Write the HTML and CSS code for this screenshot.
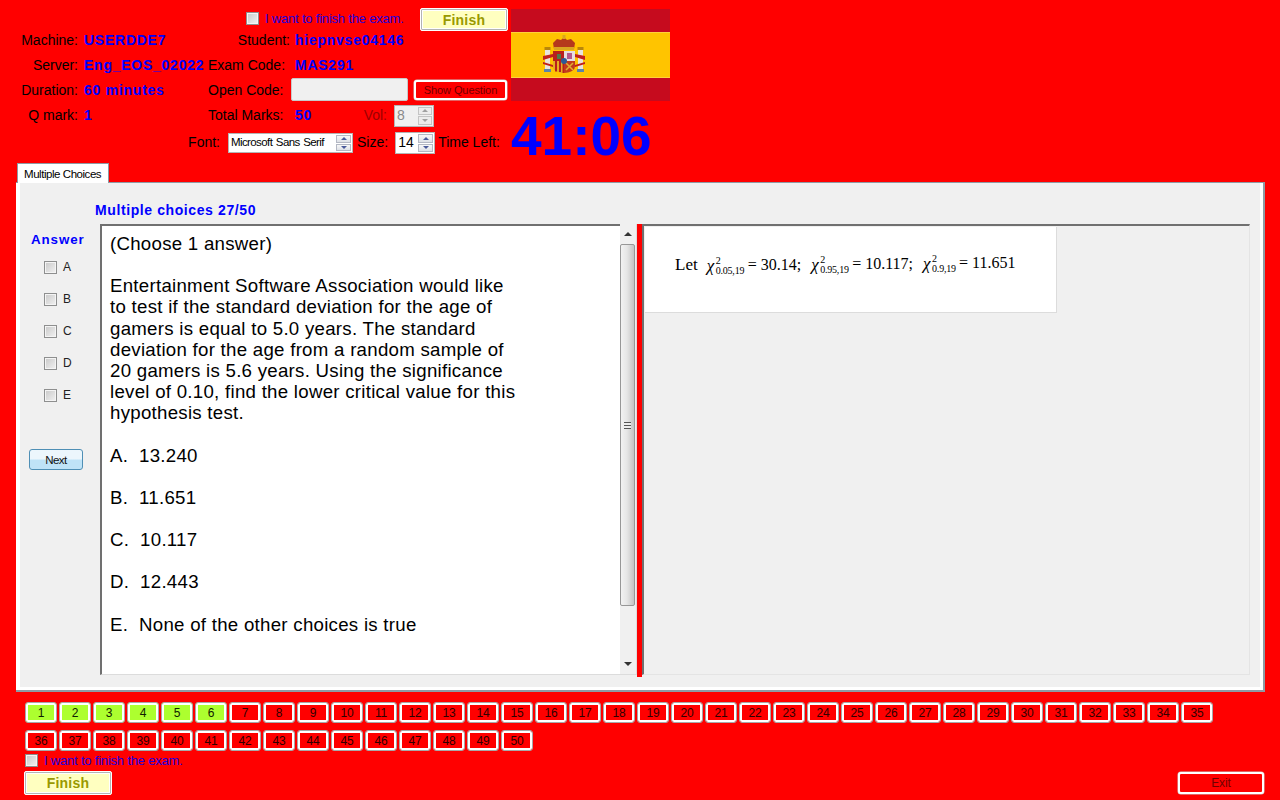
FILE: index.html
```html
<!DOCTYPE html>
<html lang="en">
<head>
<meta charset="utf-8">
<title>Exam</title>
<link rel="stylesheet" href="styles.css">
</head>
<body>
<header class="header">
  <div class="info">
    <div class="row row-top">
      <input type="checkbox" class="check check-top">
      <span class="finish-label label-top">I want to finish the exam.</span>
      <button class="finish finish-top">Finish</button>
    </div>
    <div class="row">
      <span class="lab lab-a">Machine:</span><span class="val val-a">USERDDE7</span>
      <span class="lab lab-student">Student:</span><span class="val val-student">hiepnvse04146</span>
    </div>
    <div class="row">
      <span class="lab lab-a">Server:</span><span class="val val-a">Eng_EOS_02022</span>
      <span class="lab lab-b">Exam Code:</span><span class="val val-b">MAS291</span>
    </div>
    <div class="row">
      <span class="lab lab-a">Duration:</span><span class="val val-a">60 minutes</span>
      <span class="lab lab-b">Open Code:</span><span class="open-code"></span>
      <button class="outline show-question">Show Question</button>
    </div>
    <div class="row">
      <span class="lab lab-a">Q mark:</span><span class="val val-a">1</span>
      <span class="lab lab-b">Total Marks:</span><span class="val val-b val-marks">50</span>
      <span class="lab lab-vol">Vol:</span>
      <span class="spin spin-vol"><span class="spin-text">8</span><span class="spin-btns"><i class="up"></i><i class="down"></i></span></span>
    </div>
    <div class="row row-font">
      <span class="lab lab-font">Font:</span>
      <span class="spin spin-font"><span class="spin-text">Microsoft Sans Serif</span><span class="spin-btns"><i class="up"></i><i class="down"></i></span></span>
      <span class="lab lab-size">Size:</span>
      <span class="spin spin-size"><span class="spin-text">14</span><span class="spin-btns"><i class="up"></i><i class="down"></i></span></span>
      <span class="lab lab-time">Time Left:</span>
    </div>
  </div>
  <div class="side">
    <svg class="flag" viewBox="0 0 159 92" width="159" height="92" aria-label="Flag of Spain">
      <rect width="159" height="92" fill="#c60b1e"/>
      <rect y="23" width="159" height="46" fill="#ffd23c"/>
      <rect y="24" width="159" height="44" fill="#ffc400"/>
      <rect x="33.500" y="38" width="6" height="3" fill="#b8860b"/>
      <rect x="66.500" y="38" width="6" height="3" fill="#b8860b"/>
      <rect x="34" y="41" width="5" height="19" fill="#e8e4dc"/>
      <rect x="67" y="41" width="5" height="19" fill="#e8e4dc"/>
      <rect x="33" y="60" width="7" height="3" fill="#5b84a8"/>
      <rect x="66" y="60" width="7" height="3" fill="#5b84a8"/>
      <path d="M32 47l10-2v3l-10 3zM32 53l10 3v2l-10-3zM74 47l-10-2v3l10 3zM74 53l-10 3v2l10-3z" fill="#c0201c"/>
      <path d="M43 40l-1-6 4-4 4 1 3-3 3 3 4-1 4 4-1 6z" fill="#b5381c"/>
      <path d="M43 38h20v3H43zM51.500 26h3v4h-3z" fill="#d9a520"/>
      <path d="M42 42h22v15q0 6-11 7-11-1-11-7z" fill="#c9a227"/>
      <rect x="42" y="42" width="11" height="10" fill="#b8201c"/>
      <rect x="53" y="42" width="11" height="10" fill="#e6dfe2"/>
      <path d="M56 44h5v6h-5z" fill="#b45a8c"/>
      <path d="M46 45h4v5h-4z" fill="#4f7a4a"/>
      <path d="M42 52h11v12q-10-1-11-7z" fill="#e6ae22"/>
      <path d="M44 52h2v10.500h-2zM48 52h2v11h-2zM51.500 52h1.500v12h-1.500z" fill="#b8201c"/>
      <path d="M53 52h11v5q0 6-11 7z" fill="#c23a1c"/>
      <path d="M55 54l7 7M62 54l-7 7" stroke="#e0b030" stroke-width="1.500"/>
      <circle cx="53" cy="52" r="3" fill="#2c5a96"/>
    </svg>
    <div class="clock">41:06</div>
  </div>
</header>

<div class="tabs"><div class="tab">Multiple Choices</div></div>
<main class="panel">
  <h2 class="counter">Multiple choices 27/50</h2>
  <div class="work">
    <aside class="answers">
      <h3 class="answer-title">Answer</h3>
      <label class="option"><input type="checkbox" class="check"><span>A</span></label>
      <label class="option"><input type="checkbox" class="check"><span>B</span></label>
      <label class="option"><input type="checkbox" class="check"><span>C</span></label>
      <label class="option"><input type="checkbox" class="check"><span>D</span></label>
      <label class="option"><input type="checkbox" class="check"><span>E</span></label>
      <button class="next">Next</button>
    </aside>
    <section class="question">
      <div class="question-text">
        <p>(Choose 1 answer)</p>
        <p>Entertainment Software Association would like to test if the standard deviation for the age of gamers is equal to 5.0 years. The standard deviation for the age from a random sample of 20 gamers is 5.6 years. Using the significance level of 0.10, find the lower critical value for this hypothesis test.</p>
        <p>A.&nbsp; 13.240</p>
        <p>B.&nbsp; 11.651</p>
        <p>C.&nbsp; 10.117</p>
        <p>D.&nbsp; 12.443</p>
        <p>E.&nbsp; None of the other choices is true</p>
      </div>
      <div class="scrollbar">
        <div class="sb-btn"><i class="tri-up"></i></div>
        <div class="sb-thumb"><i class="grip"></i></div>
        <div class="sb-rest"></div>
        <div class="sb-btn"><i class="tri-down"></i></div>
      </div>
    </section>
    <div class="splitter"></div>
    <section class="figure-pane">
      <div class="figure">
        <span class="let">Let</span>
        <span class="term t1"><i class="chi">χ</i><span class="scr scr1"><sup>2</sup><sub>0.05,19</sub></span><span class="eq">=</span><span class="num">30.14;</span></span>
        <span class="term t2"><i class="chi">χ</i><span class="scr scr1"><sup>2</sup><sub>0.95,19</sub></span><span class="eq">=</span><span class="num">10.117;</span></span>
        <span class="term t3"><i class="chi">χ</i><span class="scr scr2"><sup>2</sup><sub>0.9,19</sub></span><span class="eq">=</span><span class="num">11.651</span></span>
      </div>
    </section>
  </div>
</main>

<nav class="numbers">
  <button class="num-btn done">1</button><button class="num-btn done">2</button><button class="num-btn done">3</button><button class="num-btn done">4</button><button class="num-btn done">5</button><button class="num-btn done">6</button><button class="num-btn">7</button><button class="num-btn">8</button><button class="num-btn">9</button><button class="num-btn">10</button>
  <button class="num-btn">11</button><button class="num-btn">12</button><button class="num-btn">13</button><button class="num-btn">14</button><button class="num-btn">15</button><button class="num-btn">16</button><button class="num-btn">17</button><button class="num-btn">18</button><button class="num-btn">19</button><button class="num-btn">20</button>
  <button class="num-btn">21</button><button class="num-btn">22</button><button class="num-btn">23</button><button class="num-btn">24</button><button class="num-btn">25</button><button class="num-btn">26</button><button class="num-btn">27</button><button class="num-btn">28</button><button class="num-btn">29</button><button class="num-btn">30</button>
  <button class="num-btn">31</button><button class="num-btn">32</button><button class="num-btn">33</button><button class="num-btn">34</button><button class="num-btn">35</button><button class="num-btn">36</button><button class="num-btn">37</button><button class="num-btn">38</button><button class="num-btn">39</button><button class="num-btn">40</button>
  <button class="num-btn">41</button><button class="num-btn">42</button><button class="num-btn">43</button><button class="num-btn">44</button><button class="num-btn">45</button><button class="num-btn">46</button><button class="num-btn">47</button><button class="num-btn">48</button><button class="num-btn">49</button><button class="num-btn">50</button>
</nav>

<footer class="footer">
  <div class="footer-left">
    <div class="finish-row">
      <input type="checkbox" class="check">
      <span class="finish-label">I want to finish the exam.</span>
    </div>
    <button class="finish finish-bottom">Finish</button>
  </div>
  <button class="outline exit">Exit</button>
</footer>
</body>
</html>
```
FILE: styles.css
```css
* { box-sizing: border-box; }
html, body { margin: 0; height: 100%; }
body {
  width: 1280px;
  height: 800px;
  overflow: hidden;
  background: #ff0000;
  color: #000;
  font-family: "Liberation Sans", Arial, sans-serif;
  font-size: 14px;
  display: flex;
  flex-direction: column;
}
button { font-family: inherit; padding: 0; cursor: default; }

/* header */
.header { display: flex; height: 163px; flex: none; }
.info { width: 511px; flex: none; }
.row { display: flex; align-items: center; height: 25px; white-space: nowrap; }
.row-top { height: 27px; padding-left: 246px; align-items: flex-start; padding-top: 11px; }
.row-font { height: 30px; }
.lab { flex: none; text-align: right; }
.val { flex: none; color: #0000ff; font-weight: bold; letter-spacing: .75px; }
.lab-a { width: 78px; }
.val-a { width: 124px; margin-left: 6px; }
.lab-student { width: 82px; }
.val-student { margin-left: 5px; }
.lab-b { width: 75px; }
.val-b { margin-left: 12px; }
.val-marks { width: 50px; }
.lab-vol { width: 42px; color: #9c0000; }
.lab-font { width: 220px; }
.lab-size { margin-left: 4px; }
.lab-time { margin-left: 3px; }

.check {
  appearance: none;
  -webkit-appearance: none;
  width: 13px;
  height: 13px;
  margin: 0;
  flex: none;
  border: 1px solid #8e8f8f;
  outline: 0;
  background: linear-gradient(135deg, #c8c8c8, #f2f2f2);
  box-shadow: inset 0 0 0 1px #f4f4f4;
}
.check-top { margin-top: 1px; }
.finish-label { color: #2200dd; font-size: 13px; letter-spacing: -.2px; width: 155px; }
.label-top { margin-left: 6px; margin-top: 0; }
.finish {
  background: #ffffc0;
  color: #999900;
  font-size: 14px;
  font-weight: bold;
  letter-spacing: .2px;
  border: 1px solid #ffffff;
  box-shadow: inset 0 0 0 1px #b4b4b4, inset 0 0 0 2px #ffffff;
  border-radius: 2px;
}
.finish-top { width: 88px; height: 23px; margin-top: -3px; flex: none; }
.outline {
  background: #ff0000;
  color: #700000;
  border: 2px solid #ffffff;
  border-radius: 3px;
  box-shadow: 0 0 0 .5px #c8c8c8;
  font-size: 11px;
  letter-spacing: -.1px;
}
.open-code {
  width: 117px;
  height: 23px;
  margin-left: 8px;
  flex: none;
  background: #f0f0f0;
  border: 1px solid #c8c8c8;
  border-radius: 2px;
}
.show-question { width: 93px; height: 20px; margin-left: 6px; flex: none; }

.spin {
  display: flex;
  flex: none;
  background: #fff;
  border: 1px solid #b4b4b4;
  align-items: stretch;
  overflow: hidden;
}
.spin-text { flex: 1; padding-left: 2px; min-width: 0; }
.spin-btns { width: 15px; display: flex; flex-direction: column; gap: 1px; flex: none; padding: 1px; }
.spin-btns i {
  flex: 1;
  background: linear-gradient(#f8f8f8, #dde0e6);
  border: 1px solid #b4b8c4;
  display: flex;
  align-items: center;
  justify-content: center;
}
.spin-btns i::before {
  content: "";
  border-left: 3px solid transparent;
  border-right: 3px solid transparent;
}
.spin-btns .up::before { border-bottom: 3px solid #4a5a9a; }
.spin-btns .down::before { border-top: 3px solid #4a5a9a; }
.spin-vol { width: 40px; height: 22px; margin-left: 7px; margin-top: 2px; background: #f0f0f0; color: #8a8a8a; line-height: 18px; }
.spin-vol .spin-btns { width: 16px; }
.spin-vol .spin-btns i { background: #ececec; border-color: #c4c4c4; }
.spin-vol .up::before { border-bottom-color: #a0a0a0; }
.spin-vol .down::before { border-top-color: #a0a0a0; }
.spin-font { width: 125px; height: 20px; margin-left: 8px; margin-top: 2px; font-size: 11.500px; line-height: 17px; letter-spacing: -.6px; word-spacing: 1px; }
.spin-size { width: 40px; height: 22px; margin-left: 7px; margin-top: 2px; line-height: 19px; }
.spin-size .spin-text { padding-left: 2px; }
.spin-font .spin-btns, .spin-size .spin-btns { width: 17px; }

.side { width: 159px; padding-top: 9px; flex: none; }
.flag { display: block; }
.clock {
  color: #0000ff;
  font-weight: bold;
  font-size: 55px;
  line-height: 70px;
  white-space: nowrap;
}

/* tabs and panel */
.tabs { height: 19px; padding-left: 17px; flex: none; position: relative; z-index: 1; }
.tab {
  width: 92px;
  height: 20px;
  background: #fff;
  border: 1px solid #8f9aa4;
  border-bottom: 0;
  font-size: 11.500px;
  letter-spacing: -.45px;
  line-height: 20px;
  padding-left: 6px;
  white-space: nowrap;
}
.panel {
  margin-left: 16px;
  width: 1249px;
  height: 510px;
  flex: none;
  background: #f0f0f0;
  border: 1px solid #8f9aa4;
  border-width: 1px 2px 2px 0;
  box-shadow: inset 4px 0 0 #fff, inset -3px -3px 0 #fff;
  padding: 18px 0 0 4px;
}
.counter {
  margin: 0 0 0 75px;
  color: #0000ff;
  font-size: 14px;
  font-weight: bold;
  line-height: 18px;
  height: 23px;
  letter-spacing: .6px;
  white-space: nowrap;
}
.work { display: flex; height: 451px; width: 1230px; }
.answers { width: 80px; flex: none; display: flex; flex-direction: column; }
.answer-title {
  margin: 8px 0 3px 11px;
  color: #0000ff;
  font-size: 13.330px;
  line-height: 16px;
  font-weight: bold;
  letter-spacing: .9px;
}
.option {
  display: flex;
  align-items: center;
  height: 32px;
  padding-left: 24px;
  gap: 6px;
  font-size: 12px;
  color: #222;
  margin-top: 0;
}
.next {
  width: 54px;
  height: 21px;
  margin: 38px 0 0 9px;
  border: 1px solid #4f8fb5;
  border-radius: 3px;
  background: linear-gradient(#ecf6fc 0 45%, #bfe3f7 55% 100%);
  font-size: 11.500px;
  letter-spacing: -.5px;
  color: #111;
}
.question {
  width: 537px;
  flex: none;
  display: flex;
  background: #fff;
  border: 2px solid #707070;
  border-right: 0;
  border-bottom: 1px solid #dcdcdc;
}
.question-text {
  flex: 1;
  min-width: 0;
  padding: 7px 0 0 8px;
  font-size: 18.670px;
  line-height: 21.150px;
  letter-spacing: .27px;
}
.question-text p { margin: 0 0 21.150px; width: 410px; }
.scrollbar {
  width: 17px;
  flex: none;
  margin-top: -2px;
  background: #f0f0f0;
  border-right: 1px solid #dcdcdc;
  display: flex;
  flex-direction: column;
  height: 450px;
}
.sb-btn { height: 20px; flex: none; display: flex; align-items: center; justify-content: center; }
.tri-up { border: 4px solid transparent; border-top: 0; border-bottom: 4px solid #333; }
.tri-down { border: 4px solid transparent; border-bottom: 0; border-top: 4px solid #333; }
.sb-thumb {
  height: 362px;
  width: 15px;
  flex: none;
  border: 1px solid #979797;
  border-radius: 2px;
  background: linear-gradient(90deg, #f2f2f2 0, #e6e6e6 45%, #c4c4c4 100%);
  display: flex;
  align-items: center;
  justify-content: center;
}
.grip { display: block; width: 7px; height: 7px; background: repeating-linear-gradient(#555 0 1px, #ececec 1px 3px); }
.sb-rest { flex: 1; }
.splitter { width: 5px; flex: none; background: #ff0000; margin-left: 0; height: 453px; }
.figure-pane {
  width: 608px;
  flex: none;
  background: #f0f0f0;
  border: 2px solid #707070;
  border-right: 1px solid #e4e4e4;
  border-bottom: 1px solid #e4e4e4;
  padding: 1px;
}
.figure {
  width: 412px;
  height: 86px;
  background: #fff;
  border-right: 1px solid #dcdcdc;
  border-bottom: 1px solid #dcdcdc;
  display: flex;
  align-items: flex-start;
  padding: 28px 0 0 30px;
  font-family: "Liberation Serif", "Times New Roman", serif;
  font-size: 16px;
  line-height: 20px;
  white-space: nowrap;
}
.let { font-size: 17px; margin-right: 8px; }
.term { display: flex; align-items: flex-start; margin-right: 9px; }
.t1 { margin-top: 0; }
.t2 { margin-top: -1px; }
.t3 { margin-top: -2px; }
.chi { font-size: 17px; margin-top: 1px; margin-left: 1px; width: 9px; }
.scr { display: flex; flex-direction: column; height: 24px; margin-top: 1px; }
.scr sup, .scr sub { font-size: 10px; line-height: 10px; vertical-align: baseline; }
.scr sup { height: 11px; }
.scr sub { margin-top: -1px; letter-spacing: -.2px; }
.scr1 { width: 32px; }
.scr2 { width: 27px; }
.eq { font-size: 16px; margin-right: 4px; }
.num { letter-spacing: 0; }

/* numbers */
.numbers {
  display: grid;
  grid-template-columns: repeat(35, 32px);
  grid-auto-rows: 21px;
  gap: 7px 2px;
  padding: 10px 0 0 25px;
  flex: none;
  height: 58px;
}
.num-btn {
  background: #ff0000;
  color: #300000;
  border: 1px solid #a8a8a8;
  border-radius: 3px;
  box-shadow: inset 0 0 0 2px #fff;
  font-size: 12px;
  letter-spacing: -.2px;
}
.num-btn.done { background: #adff2f; color: #102000; }

/* footer */
.footer {
  display: flex;
  justify-content: space-between;
  align-items: flex-end;
  padding: 0 16px 5px 24px;
  flex: 1;
}
.finish-row { display: flex; align-items: center; gap: 6px; height: 14px; margin-bottom: 4px; }
.finish-row .check { margin-left: 1px; }
.finish-bottom { width: 88px; height: 24px; display: block; }
.exit { width: 86px; height: 22px; margin-bottom: 1px; font-size: 12px; }
```
